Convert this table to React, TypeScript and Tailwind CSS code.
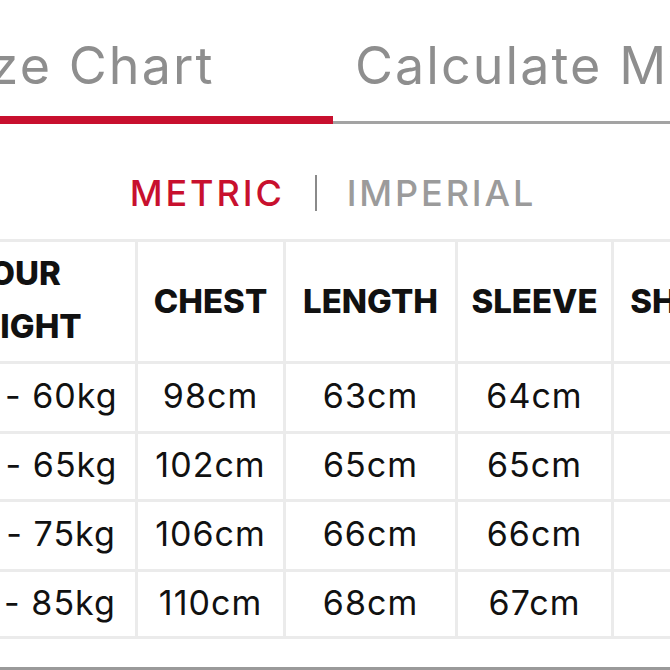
import React from "react";

const ROWS = [
  { weight: "50kg - 60kg", chest: "98cm", length: "63cm", sleeve: "64cm", shoulder: "44cm", h: "h-[70px]" },
  { weight: "60kg - 65kg", chest: "102cm", length: "65cm", sleeve: "65cm", shoulder: "46cm", h: "h-[68px]" },
  { weight: "65kg - 75kg", chest: "106cm", length: "66cm", sleeve: "66cm", shoulder: "48cm", h: "h-[70px]" },
  { weight: "75kg - 85kg", chest: "110cm", length: "68cm", sleeve: "67cm", shoulder: "50cm", h: "h-[67px]" },
];

const cell = "border-[3px] border-[#ebebeb] text-center text-[34px] tracking-[0.03em] pb-[4px]";
const head = "border-[3px] border-[#ebebeb] text-[33px] font-extrabold";

export default function App() {
  return (
    <div
      className="w-[670px] h-[670px] overflow-hidden bg-white relative"
      style={{ fontFamily: "Inter, 'Noto Sans', sans-serif" }}
    >
      <div className="-ml-[195px] w-[1056px]">
        {/* Tabs */}
        <div className="flex">
          <div className="w-[528px] flex flex-col">
            <div className="pt-[40px] pl-[16px] h-[116px] text-center text-[52px] leading-none tracking-[0.04em] text-[#8e8e8e]">
              Size Chart
            </div>
            <div className="h-[8px] bg-[#c8102e]" />
          </div>
          <div className="w-[528px] flex flex-col">
            <div className="pt-[40px] pr-[10px] h-[116px] text-center text-[52px] leading-none tracking-[0.04em] text-[#8e8e8e]">
              Calculate My Size
            </div>
            <div className="h-[8px] flex flex-col justify-end">
              <div className="h-[3px] bg-[#a3a3a3]" />
            </div>
          </div>
        </div>

        {/* Unit toggle */}
        <div className="mt-[51px] flex items-center justify-center text-[36px] leading-none font-medium tracking-[0.08em]">
          <span className="text-[#c8102e]">METRIC</span>
          <span className="mx-[30px] w-[2px] h-[36px] bg-[#8a8a8a]" />
          <span className="text-[#9b9b9b]">IMPERIAL</span>
        </div>

        {/* Table */}
        <table className="mt-[28px] ml-[100px] border-collapse text-[#111]">
          <thead>
            <tr className="h-[122px]">
              <th className={`w-[230px] pr-[16px] leading-[53px] pb-[4px] ${head}`}>
                YOUR
                <br />
                WEIGHT
              </th>
              <th className={`w-[148px] ${head}`}>CHEST</th>
              <th className={`w-[172px] ${head}`}>LENGTH</th>
              <th className={`w-[156px] ${head}`}>SLEEVE</th>
              <th className={`w-[216px] ${head}`}>SHOULDER</th>
            </tr>
          </thead>
          <tbody>
            {ROWS.map((r) => (
              <tr key={r.weight} className={r.h}>
                <td className={`pr-[16px] ${cell}`}>{r.weight}</td>
                <td className={cell}>{r.chest}</td>
                <td className={cell}>{r.length}</td>
                <td className={cell}>{r.sleeve}</td>
                <td className={cell}>{r.shoulder}</td>
              </tr>
            ))}
          </tbody>
        </table>
      </div>

      <div className="absolute left-0 right-0 bottom-0 h-[3px] bg-[#9a9a9a]" />
    </div>
  );
}
